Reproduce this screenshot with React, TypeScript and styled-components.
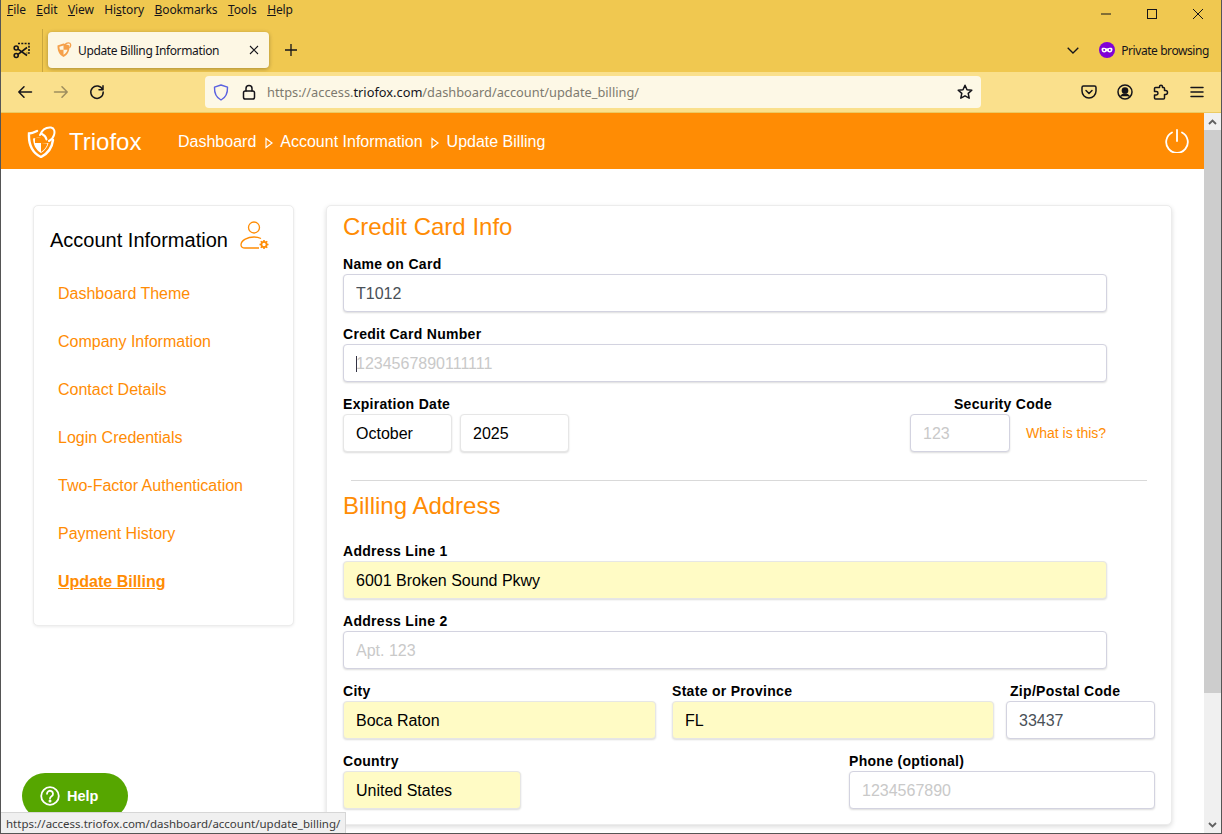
import { ReactNode } from 'react'
import styled, { createGlobalStyle } from 'styled-components'

const orange = '#ff8c04'

const GlobalStyle = createGlobalStyle`
  html, body {
    margin: 0;
    height: 100%;
    overflow: hidden;
    background: #fff;
  }
  * {
    box-sizing: border-box;
  }
`

const Window = styled.div`
  position: relative;
  width: 1222px;
  height: 834px;
  display: flex;
  flex-direction: column;
  overflow: hidden;
  border-left: 1px solid #555;
  border-right: 1px solid #555;
  border-bottom: 1px solid #555;
  font-family: "Liberation Sans", Arial, sans-serif;
`

const TitleArea = styled.div`
  background: #f0c850;
  font-family: "Noto Sans", "Open Sans", sans-serif;
  color: #15141a;
`

const MenuRow = styled.div`
  height: 28px;
  display: flex;
  align-items: flex-start;
  justify-content: space-between;
`

const MenuList = styled.div`
  display: flex;
  gap: 10.5px;
  padding: 2px 0 0 6px;
  font-size: 12px;
  line-height: 16px;
`

const MenuItem = styled.span`
  white-space: nowrap;
  letter-spacing: -0.1px;
`

const WindowControls = styled.div`
  display: flex;
  align-items: center;
  height: 28px;
`

const WindowButton = styled.div`
  width: 46px;
  height: 28px;
  display: flex;
  align-items: center;
  justify-content: center;
`

const TabRow = styled.div`
  height: 44px;
  display: flex;
  align-items: center;
`

const ToolSlot = styled.div`
  width: 42px;
  height: 43px;
  display: flex;
  align-items: center;
  justify-content: center;
  border-right: 1px solid #c9a63f;
  flex: none;
`

const Tab = styled.div`
  width: 221px;
  height: 36px;
  margin-left: 5px;
  padding: 0 10px 0 8px;
  display: flex;
  align-items: center;
  gap: 6px;
  background: #fdf7e4;
  border-radius: 4px;
  box-shadow: 0 1px 4px rgba(0, 0, 0, 0.3);
  font-size: 12px;
  flex: none;
`

const TabTitle = styled.span`
  flex: 1;
  white-space: nowrap;
  letter-spacing: -0.36px;
`

const NewTab = styled.div`
  width: 44px;
  display: flex;
  justify-content: center;
  flex: none;
`

const TabRight = styled.div`
  margin-left: auto;
  display: flex;
  align-items: center;
  padding-right: 12px;
  font-size: 12px;
`

const ChevronSlot = styled.div`
  display: flex;
  margin-right: 20px;
`

const PrivateLabel = styled.span`
  margin-left: 6px;
  white-space: nowrap;
  letter-spacing: -0.42px;
`

const NavBar = styled.div`
  height: 41px;
  display: flex;
  align-items: center;
  background: #fae08c;
  border-bottom: 1px solid #eccb63;
  color: #15141a;
`

const NavButtons = styled.div`
  width: 204px;
  padding-left: 6px;
  display: flex;
  flex: none;
`

const NavSlot = styled.div<{ $dim?: boolean }>`
  width: 36px;
  height: 32px;
  display: flex;
  align-items: center;
  justify-content: center;
  flex: none;
  opacity: ${p => (p.$dim ? 0.4 : 1)};
`

const UrlBar = styled.div`
  width: 776px;
  height: 32px;
  padding: 0 8px;
  display: flex;
  align-items: center;
  background: #fdf8e6;
  border-radius: 4px;
  flex: none;
`

const UrlIcon = styled.div<{ $width: number }>`
  width: ${p => p.$width}px;
  display: flex;
  align-items: center;
  flex: none;
`

const UrlText = styled.div`
  flex: 1;
  font-family: "Noto Sans", "Open Sans", sans-serif;
  font-size: 12.8px;
  color: #7d7a6f;
  white-space: nowrap;
`

const UrlHost = styled.span`
  color: #15141a;
`

const NavEnd = styled.div`
  margin-left: 90px;
  display: flex;
`

const PageArea = styled.div`
  flex: 1;
  min-height: 0;
  display: flex;
`

const Page = styled.div`
  flex: 1;
  min-width: 0;
  overflow: hidden;
  background: #fff;
`

const Scrollbar = styled.div`
  width: 17px;
  display: flex;
  flex-direction: column;
  background: #f0f0f0;
  flex: none;
`

const ScrollArrow = styled.div`
  height: 17px;
  display: flex;
  align-items: center;
  justify-content: center;
  flex: none;
`

const ScrollThumb = styled.div`
  height: 563px;
  background: #cdcdcd;
  flex: none;
`

const ScrollSpace = styled.div`
  flex: 1;
`

const Header = styled.header`
  height: 56px;
  padding-left: 26px;
  padding-right: 15px;
  display: flex;
  align-items: center;
  background: ${orange};
  color: #fff;
`

const Brand = styled.div`
  width: 151px;
  display: flex;
  align-items: center;
  gap: 13px;
  font-size: 24px;
  line-height: 30px;
  padding-top: 1px;
  flex: none;
`

const Crumbs = styled.nav`
  display: flex;
  align-items: center;
  font-size: 16px;
  padding-top: 1px;
`

const CrumbArrow = styled.svg`
  margin: 2px 7.5px 0 8.5px;
`

const PowerSlot = styled.div`
  margin-left: auto;
  display: flex;
`

const Content = styled.main`
  padding: 36px 32px 0 32px;
  display: flex;
  align-items: flex-start;
  gap: 32px;
`

const Card = styled.section`
  background: #fff;
  border-radius: 5px;
  border: 1px solid #ececec;
  box-shadow: 0 1px 3px rgba(0, 0, 0, 0.08);
`

const SideCard = styled(Card)`
  width: 261px;
  height: 421px;
  padding: 14px 16px 0;
  flex: none;
`

const SideHead = styled.div`
  height: 40px;
  display: flex;
  align-items: center;
  gap: 12px;
  font-size: 20px;
  color: #000;
  margin-bottom: 10px;
`

const SideIcon = styled.svg`
  margin-bottom: 10px;
  flex: none;
`

const SideLink = styled.a<{ $active?: boolean }>`
  display: block;
  height: 48px;
  padding-left: 8px;
  font-size: 16px;
  line-height: 48px;
  color: ${orange};
  font-weight: ${p => (p.$active ? 700 : 400)};
  text-decoration: ${p => (p.$active ? 'underline' : 'none')};
`

const MainCard = styled(Card)`
  width: 846px;
  height: 620px;
  padding: 5px 16px 0;
  flex: none;
  box-shadow: 0 2px 5px rgba(0, 0, 0, 0.14);
`

const SectionTitle = styled.h2<{ $space: number }>`
  margin: 0;
  height: 32px;
  margin-bottom: ${p => p.$space}px;
  font-size: 24px;
  font-weight: 400;
  line-height: 32px;
  color: ${orange};
`

const Row = styled.div<{ $columns: string; $between?: boolean }>`
  display: grid;
  grid-template-columns: ${p => p.$columns};
  justify-content: ${p => (p.$between ? 'space-between' : 'start')};
  margin-bottom: 12px;
`

const FieldBox = styled.div<{ $trim?: number }>`
  display: flex;
  flex-direction: column;
  min-width: 0;
  padding-right: ${p => p.$trim ?? 0}px;
`

const Label = styled.label<{ $indent?: number }>`
  height: 20px;
  padding-left: ${p => p.$indent ?? 0}px;
  font-size: 14px;
  font-weight: 700;
  line-height: 20px;
  letter-spacing: 0.3px;
  color: #000;
  white-space: nowrap;
`

const CodeLabel = styled(Label)`
  width: 186px;
  text-align: center;
`

const Input = styled.input<{ $filled?: boolean; $dark?: boolean; $plain?: boolean }>`
  width: 100%;
  height: 38px;
  padding: 2px 12px 0;
  font-family: inherit;
  font-size: 16px;
  color: ${p => (p.$dark ? '#000' : '#495057')};
  background: ${p => (p.$filled ? '#fffbc5' : '#fff')};
  border: 1px solid ${p => (p.$filled || p.$plain ? '#e6e6e6' : '#d3d3e0')};
  border-radius: 4px;
  box-shadow: 0 1px 2px rgba(0, 0, 0, 0.14);
  outline: none;
  &::placeholder {
    color: #c9c9c9;
    opacity: 1;
  }
`

const CaretWrap = styled.div`
  position: relative;
`

const Caret = styled.span`
  position: absolute;
  left: 13px;
  top: 12px;
  width: 1px;
  height: 16px;
  background: #334;
`

const DatePair = styled.div`
  display: flex;
  gap: 8px;
`

const DateBox = styled.div`
  width: 109px;
`

const CodeRow = styled.div`
  display: flex;
  align-items: center;
`

const CodeBox = styled.div`
  width: 100px;
`

const CodeHelp = styled.a`
  margin-left: 16px;
  font-size: 14px;
  color: ${orange};
  white-space: nowrap;
`

const Divider = styled.hr`
  margin: 28px 8px 9px 8px;
  width: 796px;
  border: 0;
  border-top: 1px solid #d9d9d9;
`

const HelpButton = styled.div`
  position: absolute;
  left: 21px;
  top: 773px;
  width: 106px;
  height: 46px;
  display: flex;
  align-items: center;
  padding-left: 18px;
  gap: 7px;
  background: #56a600;
  border-radius: 23px;
  color: #fff;
  font-size: 14.5px;
  font-weight: 700;
`

const StatusTip = styled.div`
  position: absolute;
  left: 0;
  bottom: 0;
  height: 21px;
  padding: 0 5px;
  display: flex;
  align-items: center;
  background: #f0f0f0;
  border: 1px solid #d6d6d6;
  border-left: 0;
  border-bottom: 0;
  font-family: "Noto Sans", "Open Sans", sans-serif;
  font-size: 11.5px;
  color: #3b3b3b;
  white-space: nowrap;
`

function Glyph({ children }: { children: ReactNode }) {
  return (
    <svg
      width={16}
      height={16}
      viewBox="0 0 16 16"
      fill="none"
      stroke="currentColor"
      strokeWidth="1.5"
      strokeLinecap="round"
      strokeLinejoin="round"
    >
      {children}
    </svg>
  )
}

function TriofoxLogo() {
  return (
    <svg width={29} height={32} viewBox="0 0 29 32" fill="none">
      <path
        d="M10 5 C7 6.5 4.5 7.5 2 7.5 C1.5 17 4 26 14 31 C21 27.5 25 22 26 14"
        stroke="#fff"
        strokeWidth="2.4"
        strokeLinecap="round"
      />
      <path d="M14 11 L6 12.5 C6.5 19 8.5 23.5 14 27 C18 24.5 20.5 21 21.5 17 L14 17 Z" fill="#fff" />
      <path d="M14 17 L14 11 L8 12.2 L8 17 Z" fill={orange} />
      <path d="M14 17 L14 26 C17.5 24 19.5 21 20.5 17.6 Z" fill={orange} />
      <path
        d="M13 9 C15 4 19 1 24 1.5 C27.5 2 28 6 27 9 C26 12.5 24 14 22 15 M15 8 C17 9 19 11 19.5 13.5"
        stroke="#fff"
        strokeWidth="2"
        strokeLinecap="round"
      />
    </svg>
  )
}

function TabFavicon() {
  return (
    <svg width={16} height={16} viewBox="0 0 16 16">
      <path d="M7.5 1.5L1.5 3.5C1.3 8.5 3 12.8 7.5 15C12 12.8 13.7 8.5 13.5 3.5Z" fill="#f5a04a" />
      <path d="M7.5 3.5L3.4 4.8C3.5 5.8 3.6 6.8 3.9 7.8H7.5ZM7.5 7.8V12.8C9.8 11.4 11 9.8 11.5 7.8Z" fill="#fdf7e4" />
      <path d="M8.5 3C10 1.3 12.5 .6 14 1.3C15 2.5 14.7 4.5 13.5 6" fill="none" stroke="#f5a04a" strokeWidth="1.2" />
    </svg>
  )
}

function Field({
  label,
  value,
  placeholder,
  filled,
  dark,
  trim,
  indent,
}: {
  label: string
  value?: string
  placeholder?: string
  filled?: boolean
  dark?: boolean
  trim?: number
  indent?: number
}) {
  return (
    <FieldBox $trim={trim}>
      <Label $indent={indent}>{label}</Label>
      <Input readOnly value={value ?? ''} placeholder={placeholder} $filled={filled} $dark={dark} />
    </FieldBox>
  )
}

const sideLinks = [
  'Dashboard Theme',
  'Company Information',
  'Contact Details',
  'Login Credentials',
  'Two-Factor Authentication',
  'Payment History',
]

export default function App() {
  return (
    <Window>
      <GlobalStyle />
      <TitleArea>
        <MenuRow>
          <MenuList>
            <MenuItem><u>F</u>ile</MenuItem>
            <MenuItem><u>E</u>dit</MenuItem>
            <MenuItem><u>V</u>iew</MenuItem>
            <MenuItem>Hi<u>s</u>tory</MenuItem>
            <MenuItem><u>B</u>ookmarks</MenuItem>
            <MenuItem><u>T</u>ools</MenuItem>
            <MenuItem><u>H</u>elp</MenuItem>
          </MenuList>
          <WindowControls>
            <WindowButton>
              <svg width="10" height="10" viewBox="0 0 10 10"><path d="M0 5h10" stroke="#15141a" /></svg>
            </WindowButton>
            <WindowButton>
              <svg width="10" height="10" viewBox="0 0 10 10"><rect x=".5" y=".5" width="9" height="9" fill="none" stroke="#15141a" /></svg>
            </WindowButton>
            <WindowButton>
              <svg width="10" height="10" viewBox="0 0 10 10"><path d="M0 0l10 10M10 0L0 10" stroke="#15141a" /></svg>
            </WindowButton>
          </WindowControls>
        </MenuRow>
        <TabRow>
          <ToolSlot>
            <svg width="17" height="17" viewBox="0 0 17 17" fill="none" stroke="#15141a" strokeWidth="1.6">
              <path d="M5 1.5H16V11H13" strokeDasharray="2 1.3" />
              <circle cx="3.2" cy="6" r="2" />
              <circle cx="3.2" cy="13.5" r="2" />
              <path d="M5 7.2L14 13.5M5 12.3L14 5.5" />
            </svg>
          </ToolSlot>
          <Tab>
            <TabFavicon />
            <TabTitle>Update Billing Information</TabTitle>
            <svg width="10" height="10" viewBox="0 0 10 10"><path d="M1 1l8 8M9 1L1 9" stroke="#15141a" strokeWidth="1.1" /></svg>
          </Tab>
          <NewTab>
            <svg width="12" height="12" viewBox="0 0 12 12"><path d="M6 0v12M0 6h12" stroke="#15141a" strokeWidth="1.3" /></svg>
          </NewTab>
          <TabRight>
            <ChevronSlot>
              <svg width="12" height="7" viewBox="0 0 12 7" fill="none"><path d="M.7.7L6 6l5.3-5.3" stroke="#15141a" strokeWidth="1.3" /></svg>
            </ChevronSlot>
            <svg width="16" height="16" viewBox="0 0 16 16">
              <circle cx="8" cy="8" r="8" fill="#8000d7" />
              <path d="M2.5 7.2c0-1 .8-1.5 1.8-1.5 1.3 0 2.5.7 3.7.7s2.4-.7 3.7-.7c1 0 1.8.5 1.8 1.5 0 2-1.2 3.3-2.8 3.3-1.4 0-1.8-1.3-2.7-1.3s-1.3 1.3-2.7 1.3c-1.6 0-2.8-1.3-2.8-3.3z" fill="#fff" />
              <circle cx="5.2" cy="8" r="1" fill="#8000d7" />
              <circle cx="10.8" cy="8" r="1" fill="#8000d7" />
            </svg>
            <PrivateLabel>Private browsing</PrivateLabel>
          </TabRight>
        </TabRow>
      </TitleArea>

      <NavBar>
        <NavButtons>
          <NavSlot>
            <Glyph><path d="M14.5 8H1.8M7 2.8L1.8 8 7 13.2" /></Glyph>
          </NavSlot>
          <NavSlot $dim>
            <Glyph><path d="M1.5 8h12.7M9 2.8L14.2 8 9 13.2" /></Glyph>
          </NavSlot>
          <NavSlot>
            <Glyph><path d="M13.6 5.5A6.2 6.2 0 1 0 14.2 8M14 1.8v4h-4" /></Glyph>
          </NavSlot>
        </NavButtons>
        <UrlBar>
          <UrlIcon $width={28}>
            <svg width="16" height="17" viewBox="0 0 16 17" fill="none">
              <path d="M8 1L1.5 3.2c-.2 5 .8 9.8 6.5 12.8 5.7-3 6.7-7.8 6.5-12.8z" stroke="#5b62e0" strokeWidth="1.4" strokeLinejoin="round" />
            </svg>
          </UrlIcon>
          <UrlIcon $width={26}>
            <Glyph>
              <rect x="2.5" y="7" width="11" height="8" rx="1.8" />
              <path d="M5 7V4.5a3 3 0 0 1 6 0V7" />
            </Glyph>
          </UrlIcon>
          <UrlText>
            https://access.<UrlHost>triofox.com</UrlHost>/dashboard/account/update_billing/
          </UrlText>
          <Glyph>
            <path d="M8 1.3l2 4.4 4.8.5-3.6 3.2 1 4.8L8 11.8l-4.2 2.4 1-4.8-3.6-3.2 4.8-.5z" />
          </Glyph>
        </UrlBar>
        <NavEnd>
          <NavSlot>
            <Glyph>
              <path d="M2.5 2h11A1.5 1.5 0 0 1 15 3.5V7a7 7 0 0 1-14 0V3.5A1.5 1.5 0 0 1 2.5 2z" />
              <path d="M5 6.5l3 3 3-3" />
            </Glyph>
          </NavSlot>
          <NavSlot>
            <Glyph>
              <circle cx="8" cy="8" r="7" />
              <circle cx="8" cy="6.5" r="2.6" fill="currentColor" />
              <path d="M3.8 12.2c1-1.5 2.5-2 4.2-2s3.2.5 4.2 2" fill="currentColor" />
            </Glyph>
          </NavSlot>
          <NavSlot>
            <Glyph>
              <path d="M6.5 3.5h-4a1 1 0 0 0-1 1v3h1.800a1.700 1.700 0 0 1 0 3.400H1.500v3a1 1 0 0 0 1 1h8a1 1 0 0 0 1-1v-3.400h1a2 2 0 0 0 0-4h-1V4.500a1 1 0 0 0-1-1H9.500v-.7a1.500 1.500 0 0 0-3 0z" />
            </Glyph>
          </NavSlot>
          <NavSlot>
            <Glyph><path d="M2 3.5h12M2 8h12M2 12.5h12" /></Glyph>
          </NavSlot>
        </NavEnd>
      </NavBar>

      <PageArea>
        <Page>
          <Header>
            <Brand>
              <TriofoxLogo />
              Triofox
            </Brand>
            <Crumbs>
              Dashboard
              <CrumbArrow width="8" height="12" viewBox="0 0 8 12" fill="none"><path d="M1 1.5l6 4.500-6 4.500z" stroke="#fff" strokeWidth="1.2" /></CrumbArrow>
              Account Information
              <CrumbArrow width="8" height="12" viewBox="0 0 8 12" fill="none"><path d="M1 1.5l6 4.500-6 4.500z" stroke="#fff" strokeWidth="1.2" /></CrumbArrow>
              Update Billing
            </Crumbs>
            <PowerSlot>
              <svg width="24" height="24" viewBox="0 0 24 24" fill="none" stroke="#fff" strokeWidth="1.8" strokeLinecap="round">
                <path d="M12 1v11" />
                <path d="M7 3.5a10.800 10.800 0 1 0 10 0" />
              </svg>
            </PowerSlot>
          </Header>
          <Content>
            <SideCard>
              <SideHead>
                Account Information
                <SideIcon width="29" height="29" viewBox="0 0 29 29" fill="none" stroke={orange} strokeWidth="1.3">
                  <circle cx="14" cy="6.5" r="5.5" />
                  <path d="M19 27H5c-2.500 0-4-1-4-3 0-5 7-8 13-8 2.500 0 5 .5 7 1.500" />
                  <circle cx="24" cy="23.500" r="2.600" strokeWidth="1.800" />
                  <path d="M24 19v1.500M24 26.500V28M19.500 23.500H21M27 23.500h1.500M20.800 20.300l1 1M26.200 25.700l1 1M20.800 26.700l1-1M26.200 21.300l1-1" strokeWidth="1.600" />
                </SideIcon>
              </SideHead>
              {sideLinks.map(link => (
                <SideLink key={link}>{link}</SideLink>
              ))}
              <SideLink $active>Update Billing</SideLink>
            </SideCard>
            <MainCard>
              <SectionTitle $space={11}>Credit Card Info</SectionTitle>
              <Row $columns="764px">
                <Field label="Name on Card" value="T1012" />
              </Row>
              <Row $columns="764px">
                <FieldBox>
                  <Label>Credit Card Number</Label>
                  <CaretWrap>
                    <Input readOnly value="" placeholder="1234567890111111" />
                    <Caret />
                  </CaretWrap>
                </FieldBox>
              </Row>
              <Row $columns="567px 197px">
                <FieldBox>
                  <Label>Expiration Date</Label>
                  <DatePair>
                    <DateBox><Input readOnly value="October" $dark $plain /></DateBox>
                    <DateBox><Input readOnly value="2025" $dark $plain /></DateBox>
                  </DatePair>
                </FieldBox>
                <FieldBox>
                  <CodeLabel>Security Code</CodeLabel>
                  <CodeRow>
                    <CodeBox><Input readOnly value="" placeholder="123" /></CodeBox>
                    <CodeHelp>What is this?</CodeHelp>
                  </CodeRow>
                </FieldBox>
              </Row>
              <Divider />
              <SectionTitle $space={19}>Billing Address</SectionTitle>
              <Row $columns="764px">
                <Field label="Address Line 1" value="6001 Broken Sound Pkwy" filled dark />
              </Row>
              <Row $columns="764px">
                <Field label="Address Line 2" placeholder="Apt. 123" />
              </Row>
              <Row $columns="329px 334px 149px">
                <Field label="City" value="Boca Raton" filled dark trim={16} />
                <Field label="State or Province" value="FL" filled dark trim={12} />
                <Field label="Zip/Postal Code" value="33437" indent={4} />
              </Row>
              <Row $columns="178px 306px" $between>
                <Field label="Country" value="United States" filled dark />
                <Field label="Phone (optional)" placeholder="1234567890" />
              </Row>
            </MainCard>
          </Content>
        </Page>
        <Scrollbar>
          <ScrollArrow>
            <svg width="9" height="6" viewBox="0 0 9 6" fill="none"><path d="M1 5l3.5-3.5L8 5" stroke="#606060" strokeWidth="1.8" /></svg>
          </ScrollArrow>
          <ScrollThumb />
          <ScrollSpace />
          <ScrollArrow>
            <svg width="9" height="6" viewBox="0 0 9 6" fill="none"><path d="M1 1l3.5 3.5L8 1" stroke="#606060" strokeWidth="1.8" /></svg>
          </ScrollArrow>
        </Scrollbar>
      </PageArea>

      <HelpButton>
        <svg width="20" height="20" viewBox="0 0 20 20" fill="none" stroke="#fff" strokeWidth="1.8">
          <circle cx="10" cy="10" r="8.8" />
          <path d="M7 7.8a3 3 0 1 1 4.600 2.500c-1 .7-1.600 1.200-1.600 2.200" strokeLinecap="round" />
          <circle cx="10" cy="15" r=".6" fill="#fff" />
        </svg>
        Help
      </HelpButton>
      <StatusTip>https://access.triofox.com/dashboard/account/update_billing/</StatusTip>
    </Window>
  )
}
